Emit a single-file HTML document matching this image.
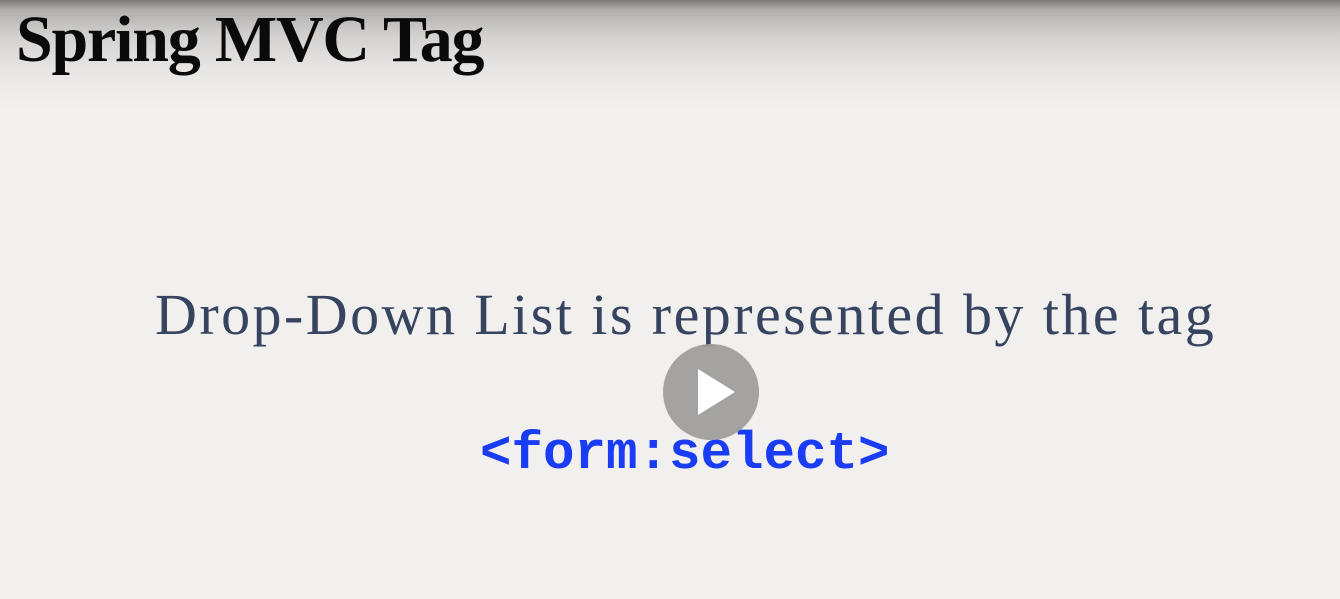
<!DOCTYPE html>
<html><head><style>
html,body{margin:0;padding:0}
body{width:1340px;height:599px;position:relative;overflow:hidden;background:#f2f0ee}
.top{position:absolute;left:0;top:0;width:1340px;height:110px;background:linear-gradient(#7a7978 0px,#b0afae 10px,#d3d1cf 35px,#e8e6e4 70px,#f2f0ee 110px)}
.t{position:absolute;left:16px;top:2px;font-family:"Liberation Serif",serif;font-weight:bold;font-size:66px;color:#0a0a0a;letter-spacing:-1.2px;white-space:nowrap}
.b{position:absolute;left:155px;top:281px;font-family:"Liberation Serif",serif;font-size:58px;color:#36445f;white-space:nowrap;letter-spacing:2.45px}
.c{position:absolute;left:480px;top:424px;font-family:"Liberation Mono",monospace;font-weight:bold;font-size:52.5px;color:#1a3cf5;white-space:nowrap}
.p{position:absolute;left:663px;top:344px;width:96px;height:96px;border-radius:50%;background:rgba(158,156,154,0.92)}
</style></head><body>
<div class="top"></div>
<div class="t">Spring MVC Tag</div>
<div class="b">Drop-Down List is represented by the tag</div>
<div class="c">&lt;form:select&gt;</div>
<div class="p"><svg width="96" height="96"><path d="M35 25 L72 48 L35 71 Z" fill="#fff"/></svg></div>
</body></html>
